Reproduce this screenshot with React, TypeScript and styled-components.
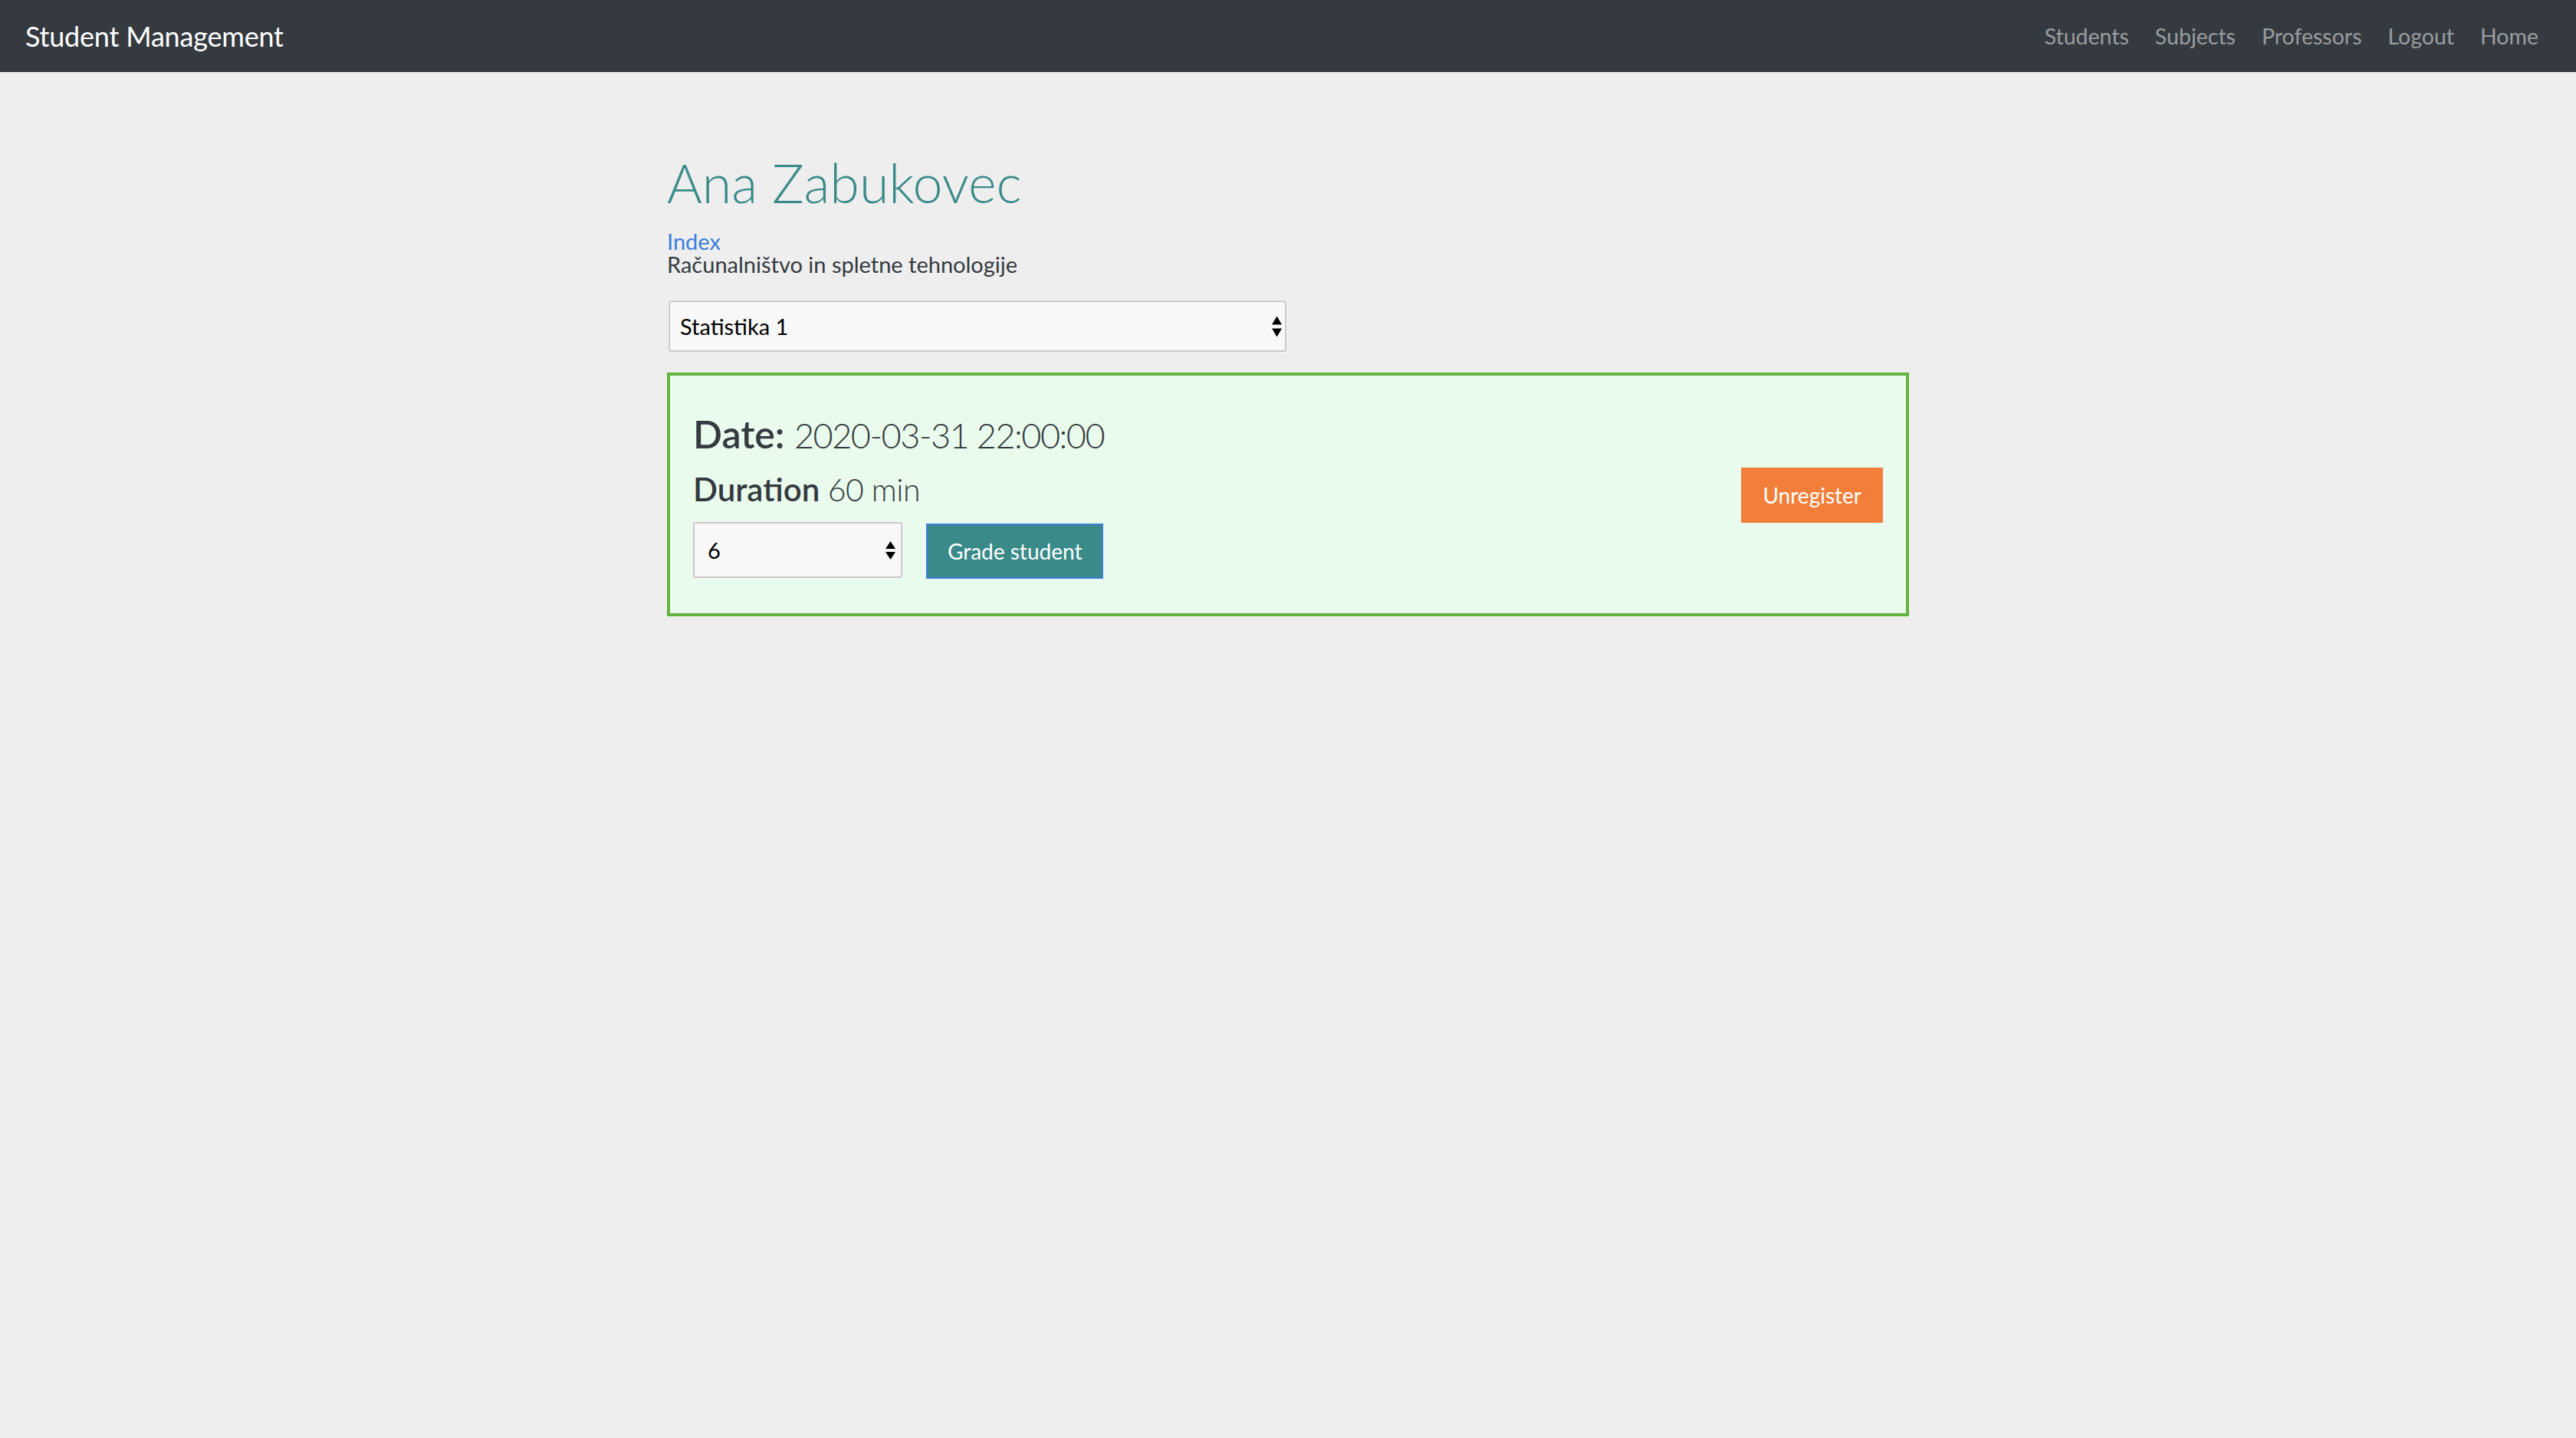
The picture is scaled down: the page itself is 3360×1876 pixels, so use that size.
import React from "react";
import styled, { createGlobalStyle } from "styled-components";

const GlobalStyle = createGlobalStyle`
  html, body {
    margin: 0;
    padding: 0;
    background: #eeeeee;
    font-family: "Lato", "Open Sans", sans-serif;
    color: #343a40;
  }
  * { box-sizing: border-box; }
`;

const Page = styled.div`
  min-height: 1876px;
  background: #eeeeee;
`;

const Navbar = styled.nav`
  height: 94px;
  background: #343a40;
  display: flex;
  align-items: center;
  justify-content: space-between;
  padding: 0 32px 0 33px;
`;

const Brand = styled.a`
  font-size: 36px;
  color: #ffffff;
  text-decoration: none;
  letter-spacing: -0.2px;
`;

const NavList = styled.div`
  display: flex;
  align-items: center;
`;

const NavLink = styled.a`
  font-size: 28.5px;
  color: rgba(255, 255, 255, 0.5);
  padding: 0 17px;
  text-decoration: none;
`;

const Main = styled.main`
  width: 1620px;
  margin: 0 auto;
  padding-top: 102px;
`;

const Title = styled.h1`
  margin: 0;
  font-size: 70px;
  line-height: 85px;
  font-weight: 300;
  color: #3a8a8a;
`;

const IndexLink = styled.a`
  display: block;
  margin-top: 19px;
  font-size: 29px;
  line-height: 30px;
  color: #3b7ddb;
  text-decoration: none;
`;

const Program = styled.div`
  font-size: 29px;
  line-height: 30px;
  color: #343a40;
`;

const SelectWrap = styled.div<{ $width: number; $height: number; $arrowRight: number }>`
  position: relative;
  width: ${(p) => p.$width}px;
  height: ${(p) => p.$height}px;
  flex: none;

  svg {
    position: absolute;
    right: ${(p) => p.$arrowRight}px;
    top: 50%;
    transform: translateY(-50%);
    pointer-events: none;
  }
`;

const NativeSelect = styled.select<{ $pad: number }>`
  appearance: none;
  -webkit-appearance: none;
  width: 100%;
  height: 100%;
  background: #f8f8f8;
  border: 2px solid #c9c9c9;
  border-radius: 3px;
  box-shadow: 0 0 0 1px #f6f6f6;
  font-family: "Lato", "Open Sans", sans-serif;
  font-size: 29px;
  color: #000000;
  padding: 0 40px 0 ${(p) => p.$pad}px;
  outline: none;
`;

const MainSelectWrap = styled(SelectWrap)`
  margin-top: 32px;
  margin-left: 2px;
`;

const ExamCard = styled.section`
  margin-top: 27px;
  border: 4px solid #65b33e;
  background: #e9fbec;
  padding: 46px 30px 45px 30px;
  display: flex;
  align-items: center;
  justify-content: space-between;
`;

const ExamInfo = styled.div`
  display: flex;
  flex-direction: column;
`;

const DateLine = styled.h4`
  margin: 0;
  font-size: 50px;
  line-height: 60px;
  font-weight: 600;
  color: #343a40;
`;

const DurationLine = styled.h5`
  margin: 17px 0 0 0;
  font-size: 42px;
  line-height: 50px;
  font-weight: 600;
  color: #343a40;
`;

const LightValue = styled.span<{ $size: number; $spacing: number }>`
  font-weight: 300;
  font-size: ${(p) => p.$size}px;
  line-height: 1;
  letter-spacing: ${(p) => p.$spacing}px;
`;

const GradeRow = styled.div`
  margin-top: 17px;
  display: flex;
  align-items: center;
  gap: 31px;
`;

const ActionButton = styled.button<{ $bg: string; $border: string }>`
  height: 72px;
  padding: 0 26px;
  font-family: "Lato", "Open Sans", sans-serif;
  font-size: 28px;
  color: #ffffff;
  background: ${(p) => p.$bg};
  border: 2px solid ${(p) => p.$border};
  border-radius: 0;
  cursor: pointer;
`;

const GradeButton = styled(ActionButton)`
  margin-top: 3px;
`;

const UpDownArrows: React.FC<{ w: number; h: number; gap: number }> = ({ w, h, gap }) => (
  <svg width={w} height={h * 2 + gap} viewBox={`0 0 ${w} ${h * 2 + gap}`}>
    <polygon points={`${w / 2},0 ${w},${h} 0,${h}`} fill="#000" />
    <polygon points={`0,${h + gap} ${w},${h + gap} ${w / 2},${h * 2 + gap}`} fill="#000" />
  </svg>
);

export default function App() {
  return (
    <Page>
      <GlobalStyle />
      <Navbar>
        <Brand href="#">Student Management</Brand>
        <NavList>
          <NavLink href="#">Students</NavLink>
          <NavLink href="#">Subjects</NavLink>
          <NavLink href="#">Professors</NavLink>
          <NavLink href="#">Logout</NavLink>
          <NavLink href="#">Home</NavLink>
        </NavList>
      </Navbar>
      <Main>
        <Title>Ana Zabukovec</Title>
        <IndexLink href="#">Index</IndexLink>
        <Program>Računalništvo in spletne tehnologije</Program>
        <MainSelectWrap $width={806} $height={67} $arrowRight={6}>
          <NativeSelect $pad={13} defaultValue="Statistika 1">
            <option>Statistika 1</option>
          </NativeSelect>
          <UpDownArrows w={13} h={11} gap={5} />
        </MainSelectWrap>
        <ExamCard>
          <ExamInfo>
            <DateLine>
              Date: <LightValue $size={45} $spacing={-1.5}>2020-03-31 22:00:00</LightValue>
            </DateLine>
            <DurationLine>
              Duration <LightValue $size={41} $spacing={-0.5}>60 min</LightValue>
            </DurationLine>
            <GradeRow>
              <SelectWrap $width={273} $height={73} $arrowRight={9}>
                <NativeSelect $pad={17} defaultValue="6">
                  {[5, 6, 7, 8, 9, 10].map((g) => (
                    <option key={g}>{g}</option>
                  ))}
                </NativeSelect>
                <UpDownArrows w={13} h={10} gap={4} />
              </SelectWrap>
              <GradeButton $bg="#3a8a8a" $border="#3b7fd9">Grade student</GradeButton>
            </GradeRow>
          </ExamInfo>
          <ActionButton $bg="#f17f3a" $border="#f17f3a">Unregister</ActionButton>
        </ExamCard>
      </Main>
    </Page>
  );
}
